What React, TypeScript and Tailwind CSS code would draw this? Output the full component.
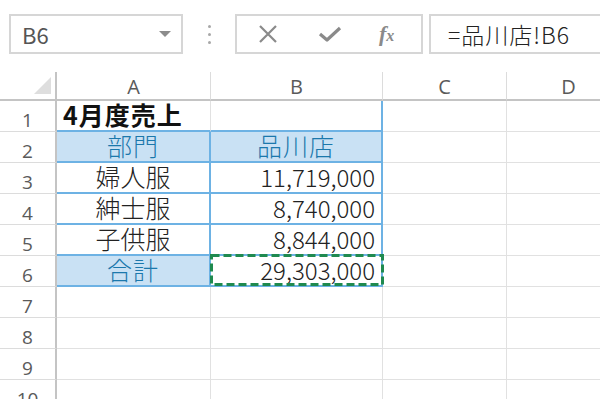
import React from "react";

const cjk = { fontFamily: '"Noto Sans CJK JP", "Noto Sans", sans-serif' };
const hdr = { fontFamily: '"Open Sans", "Noto Sans", sans-serif' };

type Row = { a?: string; b?: string; kind?: "title" | "head" | "item" | "total" };

const rows: Row[] = [
  { a: "4月度売上", kind: "title" },
  { a: "部門", b: "品川店", kind: "head" },
  { a: "婦人服", b: "11,719,000", kind: "item" },
  { a: "紳士服", b: "8,740,000", kind: "item" },
  { a: "子供服", b: "8,844,000", kind: "item" },
  { a: "合計", b: "29,303,000", kind: "total" },
  {},
  {},
  {},
  {},
];

// ×
const CancelIcon = () => (
  <svg width="20" height="18" viewBox="0 0 20 18">
    <path d="M2 1 L18 17 M18 1 L2 17" stroke="#8a8a8a" strokeWidth="2.2" fill="none" />
  </svg>
);

// ✓
const EnterIcon = () => (
  <svg width="24" height="16" viewBox="0 0 24 16">
    <path d="M2 8 L9 14 L22 2" stroke="#8a8a8a" strokeWidth="3.2" fill="none" strokeLinejoin="round" />
  </svg>
);

export default function App() {
  return (
    <div className="w-[600px] h-[399px] overflow-hidden bg-white">
      {/* 数式バー */}
      <div className="h-[72px] flex items-start pt-[14px]">
        <div
          className="ml-[9px] w-[174px] h-[40px] border-2 border-[#d6d6d6] flex items-center justify-between pl-[11px] pr-[10px] text-[22px] text-[#555]"
          style={cjk}
        >
          <span>B6</span>
          <span className="w-0 h-0 border-l-[6px] border-r-[6px] border-t-[6px] border-l-transparent border-r-transparent border-t-[#8c8c8c]" />
        </div>
        <div className="w-[52px] h-[40px] flex flex-col items-center justify-center gap-[5px]">
          <span className="w-[3px] h-[3px] rounded-full bg-[#a8a8a8]" />
          <span className="w-[3px] h-[3px] rounded-full bg-[#a8a8a8]" />
          <span className="w-[3px] h-[3px] rounded-full bg-[#a8a8a8]" />
        </div>
        <div className="w-[188px] h-[40px] border-2 border-[#d6d6d6] flex items-center pl-[21px]">
          <CancelIcon />
          <span className="ml-[40px]">
            <EnterIcon />
          </span>
          <span
            className="ml-[37px] italic font-bold text-[22px] text-[#8a8a8a] leading-none"
            style={{ fontFamily: '"Liberation Serif", serif' }}
          >
            f<span className="text-[16px]">x</span>
          </span>
        </div>
        <div
          className="ml-[6px] flex-1 mr-[-10px] h-[40px] border-2 border-[#d6d6d6] flex items-center pl-[17px] text-[23px] tracking-[1px] text-[#222] font-light"
          style={cjk}
        >
          =品川店!B6
        </div>
      </div>

      {/* シート */}
      <div className="grid grid-cols-[57px_154px_172px_124px_124px] grid-rows-[29px_repeat(10,31px)]">
        {/* 全選択の三角 */}
        <div className="relative border-r-2 border-b-2 border-[#c4c4c4]">
          <div className="absolute right-[4px] bottom-[5px] w-0 h-0 border-b-[17px] border-l-[17px] border-b-[#dedede] border-l-transparent" />
        </div>
        {["A", "B", "C", "D"].map((c) => (
          <div
            key={c}
            className="border-r border-b-2 border-r-[#dcdcdc] border-b-[#c4c4c4] flex items-center justify-center pt-[2px] text-[20px] text-[#5a5a5a]"
            style={hdr}
          >
            {c}
          </div>
        ))}

        {rows.map((r, i) => {
          const inTable = i >= 1 && i <= 5;
          const blueTop = i === 0;
          const fill = r.kind === "head" || r.kind === "total";
          return (
            <React.Fragment key={i}>
              <div
                className="border-r-2 border-b border-r-[#c4c4c4] border-b-[#dcdcdc] flex items-end justify-center text-[19px] text-[#5a5a5a] leading-none pb-[1px]"
                style={hdr}
              >
                {i + 1}
              </div>
              <div
                className={
                  "flex items-end leading-none pb-[3px] text-[25px] font-light " +
                  (inTable
                    ? "border-r-2 border-b-2 border-[#6db2e4] "
                    : blueTop
                    ? "border-r border-b-2 border-r-[#e1e1e1] border-b-[#6db2e4] "
                    : "border-r border-b border-[#e1e1e1] ") +
                  (fill ? "bg-[#c9e1f4] text-[#1b78ac] justify-center tracking-[1px] " : "") +
                  (r.kind === "item" ? "text-[#222] justify-center " : "") +
                  (r.kind === "title" ? "!font-bold text-[#111] pl-[6px] tracking-[1px] " : "")
                }
                style={cjk}
              >
                {r.a}
              </div>
              <div
                className={
                  "relative flex items-end leading-none pb-[3px] font-light " +
                  (inTable
                    ? "border-r-2 border-b-2 border-[#6db2e4] "
                    : blueTop
                    ? "border-r-2 border-b-2 border-r-[#6db2e4] border-b-[#6db2e4] "
                    : "border-r border-b border-[#e1e1e1] ") +
                  (r.kind === "head" ? "bg-[#c9e1f4] text-[#1b78ac] text-[25px] tracking-[1px] justify-center " : "") +
                  (r.kind === "item" || r.kind === "total" ? "text-[24px] text-[#222] justify-end pr-[6px] " : "")
                }
                style={cjk}
              >
                {r.b}
                {r.kind === "total" && (
                  <svg className="absolute left-[-1px] top-[-2px]" width="175" height="33">
                    <rect
                      x="1.5"
                      y="1.5"
                      width="171"
                      height="29"
                      fill="none"
                      stroke="#1f8a4f"
                      strokeWidth="3"
                      strokeDasharray="8 4"
                    />
                  </svg>
                )}
              </div>
              <div className="border-r border-b border-[#e1e1e1]" />
              <div className="border-r border-b border-[#e1e1e1]" />
            </React.Fragment>
          );
        })}
      </div>
    </div>
  );
}
